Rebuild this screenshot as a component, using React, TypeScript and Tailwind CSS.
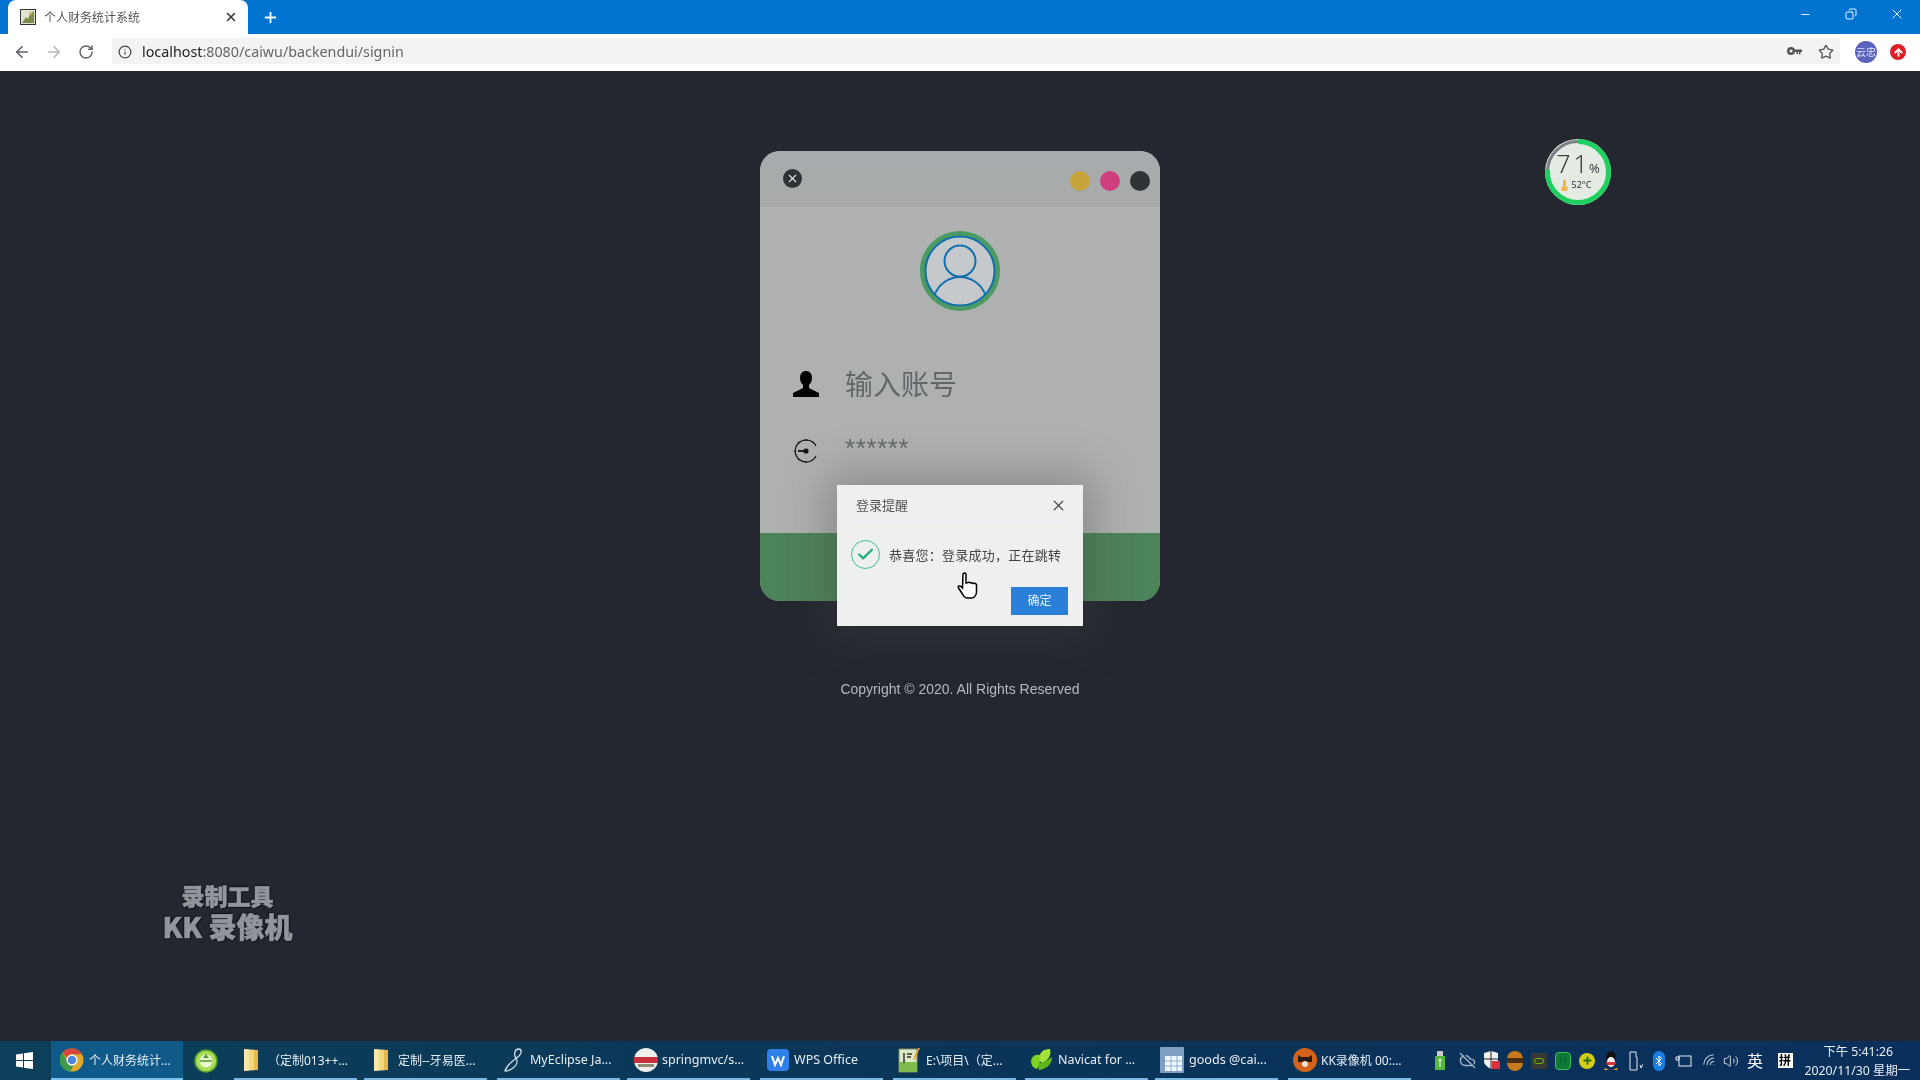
import React from "react";
import { ArrowLeft, ArrowRight, RotateCw, Info, Star, X, Plus, Minus, Copy, ArrowUp, Volume2, Wifi, Bluetooth, CloudOff, Check } from "lucide-react";

const CJK = '"Noto Sans","Noto Sans CJK SC",sans-serif';

function Chrome({ s = 24 }: { s?: number }) {
  return (
    <svg width={s} height={s} viewBox="0 0 48 48">
      <circle cx="24" cy="24" r="23" fill="#e0a92a" />
      <path d="M24 1a23 23 0 0 1 20 11.500H24a11.500 11.500 0 0 0-10.600 7L5 8.500A23 23 0 0 1 24 1z" fill="#d9473a" />
      <path d="M5 8.500l9.500 19A11 11 0 0 0 27 35l-6.500 11.800A23 23 0 0 1 5 8.500z" fill="#3f9a4b" />
      <circle cx="24" cy="24" r="11" fill="#fff" />
      <circle cx="24" cy="24" r="8.500" fill="#4d86e0" />
    </svg>
  );
}

function Folder() {
  return (
    <svg width="16" height="24" viewBox="0 0 16 24">
      <path d="M1 1l14 1v20l-14 1z" fill="#f5d67c" />
      <path d="M1 1l5 1v20l-5 1z" fill="#f9e7a8" />
      <path d="M11 2h4v20h-4z" fill="#e6b94e" />
    </svg>
  );
}

const taskIcons: Record<string, React.ReactNode> = {
  chrome: <Chrome />,
  folder: <Folder />,
  eclipse: (
    <svg width="22" height="26" viewBox="0 0 22 26" fill="none" stroke="#d5e2ee" strokeWidth="1.300">
      <path d="M2 24C4 17 11 13 16 9c3-3 3-7-.5-7-4 0-5 6-2.500 9 2 3 1 7-3 10-3 2-7 3.500-8 3z" />
    </svg>
  ),
  spring: (
    <svg width="24" height="24" viewBox="0 0 24 24">
      <circle cx="12" cy="12" r="12" fill="#eee" />
      <rect x="0" y="9" width="24" height="6" fill="#c5303a" />
      <rect x="4" y="16" width="16" height="3" fill="#8a8f72" />
    </svg>
  ),
  wps: (
    <svg width="22" height="22" viewBox="0 0 22 22" fill="none">
      <rect width="22" height="22" rx="4" fill="#2f7fe8" />
      <path d="M5 7l3 9 3-7 3 7 3-9" stroke="#fff" strokeWidth="2" />
    </svg>
  ),
  notepad: (
    <svg width="24" height="26" viewBox="0 0 24 26">
      <rect x="1" y="2" width="18" height="23" fill="#dfe8c4" stroke="#7b8b68" />
      <rect x="1" y="15" width="18" height="10" fill="#7fbb4c" />
      <path d="M6 6v10M9 7h5M9 10h4" stroke="#333" strokeWidth="1.500" />
      <path d="M22 1l-5 11-2 2 1-4 4-9z" fill="#e8a22c" />
    </svg>
  ),
  navicat: (
    <svg width="24" height="24" viewBox="0 0 24 24">
      <path d="M1 13c1-6 6-7 9-6 1 3 0 9-3 14-4-1-6-4-6-8z" fill="#7ed321" />
      <path d="M10 7c1-4 5-6 10-6 2 6-2 12-8 14-3-2-3-5-2-8z" fill="#a4e23a" />
      <path d="M9 15c4 0 9-3 13-6 0 7-5 12-13 13-1-2-1-4 0-7z" fill="#5cb81d" />
    </svg>
  ),
  table: (
    <svg width="24" height="26" viewBox="0 0 24 26">
      <rect width="24" height="26" rx="1" fill="#7f9fc0" />
      <rect x="5" y="9" width="17" height="15" fill="#f2f6fa" />
      <path d="M5 14h17M5 19h17M11 9v15M17 9v15" stroke="#8fb0cf" />
    </svg>
  ),
  kk: (
    <svg width="24" height="24" viewBox="0 0 24 24">
      <circle cx="12" cy="12" r="12" fill="#d4621b" />
      <path d="M5 7l3 2h8l3-2v7H5z" fill="#2a1a12" />
      <circle cx="12" cy="16" r="3" fill="#efe3d2" />
    </svg>
  ),
  green: (
    <svg width="24" height="24" viewBox="0 0 24 24">
      <circle cx="12" cy="12" r="11" fill="#a9dc55" stroke="#4f9d2a" strokeWidth="1.500" />
      <circle cx="12" cy="12" r="6.500" fill="#eaf7d2" />
      <path d="M6 12h12" stroke="#4f9d2a" strokeWidth="1.500" />
      <path d="M12 5l3 4H9z" fill="#4f9d2a" />
    </svg>
  ),
};

const tasks = [
  { icon: "chrome", label: "个人财务统计...", w: "w-[132px]", cls: "bg-[#0f5a88] border-b-2 border-[#7cc0ee] w-full pl-[9px] gap-[5px] text-[12px]" },
  { icon: "green", label: "", w: "w-[51px]", cls: "pl-[11px]" },
  { icon: "folder", label: "（定制013++...", w: "w-[130px]", cls: "border-b-2 border-[#7cb8e4] w-[123px] pl-[5px] gap-[5px] text-[12px]" },
  { icon: "folder", label: "定制--牙易医...", w: "w-[133px]", cls: "border-b-2 border-[#7cb8e4] w-[123px] pl-[5px] gap-[5px] text-[12px]" },
  { icon: "eclipse", label: "MyEclipse Ja...", w: "w-[130px]", cls: "border-b-2 border-[#7cb8e4] w-[123px] pl-[5px] gap-[4px] text-[12.500px]" },
  { icon: "spring", label: "springmvc/s...", w: "w-[133px]", cls: "border-b-2 border-[#7cb8e4] w-[123px] pl-[7px] gap-[4px] text-[12.500px]" },
  { icon: "wps", label: "WPS Office", w: "w-[133px]", cls: "border-b-2 border-[#7cb8e4] w-[123px] pl-[6px] gap-[4px] text-[12.500px]" },
  { icon: "notepad", label: "E:\\项目\\（定...", w: "w-[132px]", cls: "border-b-2 border-[#7cb8e4] w-[123px] pl-[5px] gap-[4px] text-[12px]" },
  { icon: "navicat", label: "Navicat for ...", w: "w-[130px]", cls: "border-b-2 border-[#7cb8e4] w-[123px] pl-[5px] gap-[4px] text-[12.500px]" },
  { icon: "table", label: "goods @cai...", w: "w-[133px]", cls: "border-b-2 border-[#7cb8e4] w-[123px] pl-[5px] gap-[5px] text-[12.600px]" },
  { icon: "kk", label: "KK录像机 00:...", w: "w-[130px]", cls: "border-b-2 border-[#7cb8e4] w-[123px] pl-[5px] gap-[4px] text-[12px]" },
];

function TaskItem({ t }: { t: (typeof tasks)[number] }) {
  return (
    <div className={`${t.w} h-full shrink-0`}>
      <div className={`h-full flex items-center overflow-hidden whitespace-nowrap text-[#e6eef5] ${t.cls}`}>
        <span className="w-[24px] flex justify-center shrink-0">{taskIcons[t.icon]}</span>
        {t.label && <span className="pt-[2px]">{t.label}</span>}
      </div>
    </div>
  );
}

function Tray() {
  const c = "w-[24px] flex justify-center items-center shrink-0";
  return (
    <div className="flex items-center h-full text-white">
      <span className={`${c} pr-[6px]`}>
        <svg width="12" height="20" viewBox="0 0 12 20"><rect x="3" y="0" width="6" height="5" fill="#ccc" /><rect x="1" y="5" width="10" height="14" fill="#55b83a" /><path d="M6 7v9M4 10l2-2 2 2" stroke="#fff" fill="none" /></svg>
      </span>
      <span className={c}><CloudOff size={17} color="#9fb3c4" /></span>
      <span className={c}>
        <svg width="17" height="19" viewBox="0 0 17 19"><path d="M1 2l7-2 7 2v8c0 4-4 6-7 8-3-2-7-4-7-8z" fill="#f2f2f2" /><path d="M8 0v18M1 8h14" stroke="#222" /><rect x="9" y="10" width="8" height="8" fill="#d8333a" /></svg>
      </span>
      <span className={c}><span className="w-[16px] h-[20px] rounded-full bg-[#c97a1c] flex items-center"><span className="w-full h-[5px] bg-[#4b2d12]" /></span></span>
      <span className={c}><span className="w-[16px] h-[16px] bg-[#3a3a34] flex items-center justify-center"><span className="w-[10px] h-[6px] rounded-full border border-[#76b900]" /></span></span>
      <span className={c}><span className="w-[16px] h-[18px] rounded-sm bg-[#0f7a36] border border-[#37c060] flex items-center justify-center text-[10px] leading-none text-[#062]">H</span></span>
      <span className={c}><span className="w-[16px] h-[16px] rounded-full bg-[#d4cc16] flex items-center justify-center"><Plus size={11} strokeWidth={4} color="#2a6a1a" /></span></span>
      <span className={c}>
        <svg width="16" height="19" viewBox="0 0 16 19"><ellipse cx="8" cy="7" rx="5" ry="7" fill="#111" /><ellipse cx="8" cy="11" rx="4" ry="5" fill="#f4f4f4" /><path d="M3 11h10l-1 3H4z" fill="#d8333a" /><path d="M2 17l4 2H1zM14 17l-4 2h5z" fill="#e8a22c" /></svg>
      </span>
      <span className={c}>
        <svg width="15" height="20" viewBox="0 0 15 20" fill="none" stroke="#dfe8f0"><path d="M2 1h6v5h1v13H2V6h0zM12 14l1 3 2-4" /></svg>
      </span>
      <span className={c}><span className="w-[12px] h-[20px] rounded-full bg-[#1a7fe0] flex items-center justify-center"><Bluetooth size={12} color="#fff" strokeWidth={2} /></span></span>
      <span className={c}>
        <svg width="17" height="14" viewBox="0 0 17 14" fill="none" stroke="#e8eef4"><rect x="4" y="2" width="12" height="10" /><path d="M1 3h3v3H1z" /></svg>
      </span>
      <span className={`${c} pl-[6px]`}><Wifi size={16} color="#c5d3de" strokeWidth={1.500} className="-rotate-45" /></span>
      <span className={c}><Volume2 size={16} color="#e8eef4" strokeWidth={1.300} /></span>
      <span className={`${c} text-[16px]`}>英</span>
      <span className="w-[36px] flex justify-center items-center shrink-0">
        <span className="w-[15px] h-[15px] bg-white text-black text-[12px] leading-[15px] text-center font-bold">拼</span>
      </span>
      <div className="w-[117px] shrink-0 flex flex-col items-end pr-[10px] text-[12.300px] leading-[19px] text-[#e8eef4] whitespace-nowrap">
        <span className="mr-[17px]">下午 5:41:26</span>
        <span>2020/11/30 星期一</span>
      </div>
    </div>
  );
}

function Gauge() {
  return (
    <div className="absolute left-[1545px] top-[68px] w-[66px] h-[66px] rounded-full flex flex-col items-center justify-center bg-[#e4ebe3]">
      <svg className="absolute inset-0" width="66" height="66" viewBox="0 0 66 66" fill="none">
        <circle cx="33" cy="33" r="30.500" stroke="#7a7f85" strokeWidth="3" />
        <circle cx="33" cy="33" r="30.500" stroke="#1fd060" strokeWidth="5" strokeDasharray="146 192" transform="rotate(-90 33 33)" />
      </svg>
      <div className="relative flex items-end leading-none text-[#3b3f44] -mt-[3px]">
        <span className="text-[25px] font-light tracking-[3px] leading-[24px]">71</span>
        <span className="text-[13px] leading-[14px] -ml-[2px]">%</span>
      </div>
      <div className="relative flex items-center gap-[4px] text-[9px] leading-[12px] text-[#2c2f33] mt-[4px] -ml-[4px]">
        <svg width="7" height="12" viewBox="0 0 7 12"><path d="M2 1h3v6l2 2-1 3H1L0 9l2-2z" fill="#f0b54a" /></svg>
        52°C
      </div>
    </div>
  );
}

function AvatarIcon() {
  return (
    <svg width="80" height="80" viewBox="0 0 80 80" fill="none">
      <circle cx="40" cy="40" r="37.500" fill="#c6c9cb" stroke="#4c9a63" strokeWidth="5" />
      <circle cx="40" cy="40" r="34.500" stroke="#0f6fae" strokeWidth="2" />
      <circle cx="40" cy="30" r="15.500" stroke="#0f6fae" strokeWidth="2" />
      <path d="M15 63c4-10 14-17 25-17s21 7 25 17" stroke="#0f6fae" strokeWidth="2" />
    </svg>
  );
}

export default function App() {
  return (
    <div className="w-[1920px] h-[1080px] overflow-hidden flex flex-col bg-[#24272f] blur-[0.3px]" style={{ fontFamily: CJK }}>
      {/* Title bar */}
      <div className="h-[34px] shrink-0 bg-[#0074d0] flex items-end pl-[8px]">
        <div className="w-[240px] h-[34px] bg-white rounded-t-[8px] flex items-center pl-[12px] pr-[10px] gap-[8px]">
          <svg width="16" height="16" viewBox="0 0 16 16">
            <rect x="0.500" y="0.500" width="15" height="15" fill="#dfe3d2" stroke="#333" />
            <path d="M2 14l4-6 2 2 2-5 4-3v12z" fill="#7b8a4a" />
            <path d="M9 3l4 1-2 3z" fill="#c9a43a" />
          </svg>
          <span className="flex-1 text-[12px] text-[#555] pt-[2px]">个人财务统计系统</span>
          <X size={14} color="#333" strokeWidth={2.500} />
        </div>
        <div className="w-[44px] h-[34px] flex items-center justify-center">
          <Plus size={17} color="#fff" strokeWidth={2.500} />
        </div>
        <div className="flex-1" />
        <div className="h-[28px] self-start flex items-center">
          <span className="w-[46px] flex justify-center"><Minus size={13} color="#fff" strokeWidth={1.600} /></span>
          <span className="w-[46px] flex justify-center"><Copy size={12} color="#fff" strokeWidth={1.800} className="-scale-x-100" /></span>
          <span className="w-[46px] flex justify-center"><X size={16} color="#fff" strokeWidth={1.400} /></span>
        </div>
      </div>
      {/* Toolbar */}
      <div className="h-[37px] shrink-0 bg-white flex items-start pt-[4px]">
        <div className="w-[112px] h-[28px] shrink-0 flex items-center">
          <span className="w-[44px] flex justify-center"><ArrowLeft size={18} color="#5f6368" strokeWidth={2.200} /></span>
          <span className="w-[20px] flex justify-center"><ArrowRight size={18} color="#b5b8bb" strokeWidth={2.200} /></span>
          <span className="w-[44px] flex justify-center"><RotateCw size={16} color="#5f6368" strokeWidth={2.200} /></span>
        </div>
        <div className="w-[1728px] h-[26px] shrink-0 bg-[#f1f3f4] flex items-center pl-[6px] pr-[6px] pt-[2px]">
          <Info size={14} color="#444" />
          <div className="ml-[10px] text-[14.300px] leading-[24px] text-[#666]">
            <span className="text-[#222]">localhost</span>:8080/caiwu/backendui/signin
          </div>
          <div className="flex-1" />
          <svg width="15" height="10" viewBox="0 0 15 10" className="mr-[16px]" fill="#555">
            <path d="M4 0a4 4 0 1 1-.001 8A4 4 0 0 1 4 0zm0 2.500a1.500 1.500 0 1 0 0 3 1.500 1.500 0 0 0 0-3z" fillRule="evenodd" />
            <path d="M7 2.500h8v2.500h-1.500v2.500h-1.500V5h-1v2H9.500V5H7z" />
          </svg>
          <Star size={16} color="#555" strokeWidth={2} />
        </div>
        <div className="flex-1 h-[28px] flex items-center pl-[15px]">
          <span className="w-[22px] h-[22px] rounded-full bg-[#5a63bd] text-[#dfe2f5] text-[10px] text-center leading-[22px] shrink-0">云忠</span>
          <span className="ml-[13px] w-[16px] h-[16px] rounded-full bg-[#dc1f26] flex items-center justify-center shrink-0">
            <ArrowUp size={11} color="#fff" strokeWidth={4} />
          </span>
        </div>
      </div>
      {/* Page */}
      <div className="relative flex-1 flex flex-col items-center pt-[80px]">
        <Gauge />
        <div className="relative w-[400px] h-[450px] rounded-[20px] bg-[#aeb1b0] flex flex-col">
          <div className="h-[57px] shrink-0 rounded-t-[20px] bg-gradient-to-b from-[#a8abae] to-[#a9abaa] border-b border-[#b2b5b3] flex items-center pl-[23px] pr-[10px] pt-[4px]">
            <span className="w-[19px] h-[19px] rounded-full bg-[#2e3236] flex items-center justify-center -mt-[5px]">
              <X size={13} color="#e8e8e8" strokeWidth={2} />
            </span>
            <div className="flex-1" />
            <div className="flex items-center gap-[10px]">
              <span className="w-[20px] h-[20px] rounded-full bg-[#c8a53c]" />
              <span className="w-[20px] h-[20px] rounded-full bg-[#cf3f7d]" />
              <span className="w-[20px] h-[20px] rounded-full bg-[#303336]" />
            </div>
          </div>
          <div className="flex justify-center pt-[23px]"><AvatarIcon /></div>
          <div className="flex items-center pl-[32px] mt-[45px] h-[56px]">
            <svg width="28" height="28" viewBox="0 0 28 28"><path d="M14 1c4 0 6 3 6 7s-2 6-3 7v3l10 5v4H1v-4l10-5v-3c-1-1-3-3-3-7s2-7 6-7z" fill="#000" /></svg>
            <span className="ml-[25px] text-[28px] leading-[40px] text-[#62676a]">输入账号</span>
          </div>
          <div className="flex items-start pl-[32px] mt-[21px]">
            <svg width="28" height="28" viewBox="0 0 28 28" fill="none" stroke="#111" strokeWidth="1.200" className="mt-[4px]">
              <path d="M24 9a11 11 0 1 0 0 10M14 2v2M14 24v2M2 14h2M6 5l1 1M6 23l1-1M22 5l-1 1" />
              <path d="M6 14h8" strokeWidth="1.800" />
              <circle cx="14" cy="14" r="2" fill="#111" />
            </svg>
            <span className="ml-[25px] mt-[6px] text-[26px] leading-[18px] text-[#64686c] tracking-[0.600px]" style={{ fontFamily: '"Liberation Sans",sans-serif' }}>******</span>
          </div>
          <div className="flex-1" />
          <div className="h-[68px] shrink-0 rounded-b-[20px] bg-[#4d8358]" />
          {/* Dialog */}
          <div className="absolute left-[77px] top-[334px] w-[246px] h-[141px] bg-[#eef0ef] shadow-[0_0_40px_10px_rgba(70,70,70,0.35)] flex flex-col">
            <div className="h-[42px] shrink-0 flex items-center pl-[19px] pr-[16px] border-b border-[#f3f1ea]">
              <span className="flex-1 text-[13px] text-[#555]">登录提醒</span>
              <X size={17} color="#444" strokeWidth={1.700} />
            </div>
            <div className="flex items-center pl-[14px] pt-[13px]">
              <span className="w-[29px] h-[29px] rounded-full border border-[#3fbf98] flex items-center justify-center">
                <Check size={19} color="#1fb27c" strokeWidth={3} />
              </span>
              <span className="ml-[9px] text-[13px] leading-[20px] text-[#444] whitespace-nowrap tracking-[0.250px]">恭喜您：登录成功，正在跳转</span>
            </div>
            <div className="flex justify-end pr-[15px] mt-[18px]">
              <span className="w-[57px] h-[28px] bg-[#2a80d8] text-[#e8f2fb] text-[12px] leading-[28px] text-center">确定</span>
            </div>
          </div>
          {/* Pointer */}
          <svg className="absolute left-[197px] top-[421px]" width="22" height="28" viewBox="0 0 22 28" fill="#fff" stroke="#000" strokeWidth="1.500">
            <path d="M6 2c1-1.500 3-1.500 3 0v9l2-.5c1-.5 2-.5 2.500.5 1-.5 2-.5 2.500.5 1-.5 3-.5 3.500 1.500v7c0 3-2 6-5 6h-4c-3 0-4-2-5-4l-4-6c-1-2 1-3 3-1l1 1z" />
          </svg>
        </div>
        <p className="mt-[76px] text-[14px] leading-[24px] text-[#b6b8bb]" style={{ fontFamily: '"Liberation Sans",sans-serif' }}>
          Copyright © 2020. All Rights Reserved
        </p>
        {/* Recorder watermark */}
        <div className="absolute left-[160px] top-[809px] w-[135px] flex flex-col items-center font-black text-[#92959b] [-webkit-text-stroke:0.6px_#92959b] [text-shadow:0_0_2px_#0d0f13,1px_1px_1px_#0d0f13,-1px_-1px_1px_#0d0f13]" style={{ fontFamily: '"Noto Sans CJK SC",sans-serif' }}>
          <span className="text-[23px] leading-[31px]">录制工具</span>
          <span className="text-[28px] leading-[30px] whitespace-nowrap">KK 录像机</span>
        </div>
      </div>
      {/* Taskbar */}
      <div className="h-[39px] shrink-0 bg-gradient-to-r from-[#0c3f5a] via-[#0b3558] to-[#0a2f5c] flex items-center">
        <div className="w-[51px] shrink-0 flex justify-center -ml-[1px] mr-[1px]">
          <svg width="17" height="17" viewBox="0 0 17 17" fill="#fff"><path d="M0 2.500l7-1V8H0zM8 1.300L17 0v8H8zM0 9h7v6.500l-7-1zM8 9h9v8l-9-1.300z" /></svg>
        </div>
        {tasks.map((t, i) => <TaskItem key={i} t={t} />)}
        <div className="flex-1" />
        <Tray />
      </div>
    </div>
  );
}
